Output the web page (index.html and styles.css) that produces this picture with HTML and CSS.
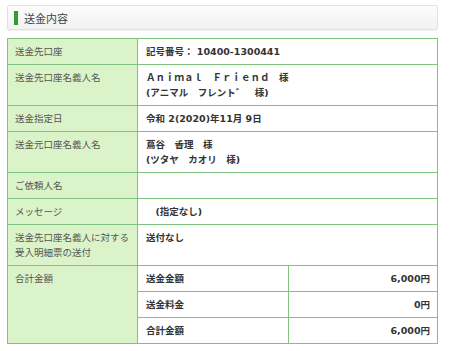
FILE: index.html
```html
<!DOCTYPE html>
<html lang="ja">
<head>
<meta charset="utf-8">
<title>送金内容</title>
<link rel="stylesheet" href="styles.css">
</head>
<body>
<div class="page">
  <div class="section-head"><span class="section-bar"></span><span class="section-title">送金内容</span></div>
  <table class="detail">
    <colgroup><col class="c-label"><col class="c-sub"><col></colgroup>
    <tr><th>送金先口座</th><td colspan="2">記号番号： 10400-1300441</td></tr>
    <tr><th>送金先口座名義人名</th><td colspan="2">Ａｎｉｍａｌ　Ｆｒｉｅｎｄ　様<br>(アニマル　フレント゛　様)</td></tr>
    <tr><th>送金指定日</th><td colspan="2">令和 2(2020)年11月 9日</td></tr>
    <tr><th>送金元口座名義人名</th><td colspan="2">蔦谷　香理　様<br>(ツタヤ　カオリ　様)</td></tr>
    <tr><th>ご依頼人名</th><td colspan="2"></td></tr>
    <tr><th>メッセージ</th><td colspan="2">　(指定なし)</td></tr>
    <tr><th>送金先口座名義人に対する受入明細票の送付</th><td colspan="2">送付なし</td></tr>
    <tr><th rowspan="3">合計金額</th><td>送金金額</td><td class="num">6,000円</td></tr>
    <tr><td>送金料金</td><td class="num">0円</td></tr>
    <tr><td>合計金額</td><td class="num">6,000円</td></tr>
  </table>
</div>
</body>
</html>
```
FILE: styles.css
```css
html, body {
  margin: 0;
  background: #fff;
}
body {
  font-family: "DejaVu Sans", "Noto Sans CJK JP", sans-serif;
  color: #333;
}
.page {
  width: 431px;
  padding: 5px 0 0 7px;
}
.section-head {
  height: 23px;
  border: 1px solid #e2e2e2;
  border-radius: 2px;
  background: linear-gradient(#fcfcfc, #f2f2f2);
  box-shadow: 0 1px 1px rgba(0,0,0,0.06);
  display: flex;
  align-items: center;
  padding-left: 6px;
}
.section-bar {
  width: 4px;
  height: 14px;
  background: #2f9e2f;
  margin-right: 6px;
}
.section-title {
  font-family: "Noto Sans CJK JP", sans-serif;
  font-size: 11px;
  color: #444;
}
.detail {
  margin-top: 8px;
  width: 431px;
  border-collapse: collapse;
  table-layout: fixed;
  font-size: 9.5px;
  line-height: 15px;
}
.c-label { width: 130px; }
.c-sub { width: 151px; }
.detail th, .detail td {
  border: 1px solid #80c280;
  padding: 5px 7px 5px 7px;
  vertical-align: top;
  text-align: left;
}
.detail th {
  background: #dbf3c8;
  font-weight: normal;
  color: #555;
  font-family: "Noto Sans CJK JP", sans-serif;
}
.detail td {
  font-weight: bold;
  color: #333;
  padding-left: 8px;
}
.detail td.num {
  text-align: right;
  padding-right: 7px;
}
```
